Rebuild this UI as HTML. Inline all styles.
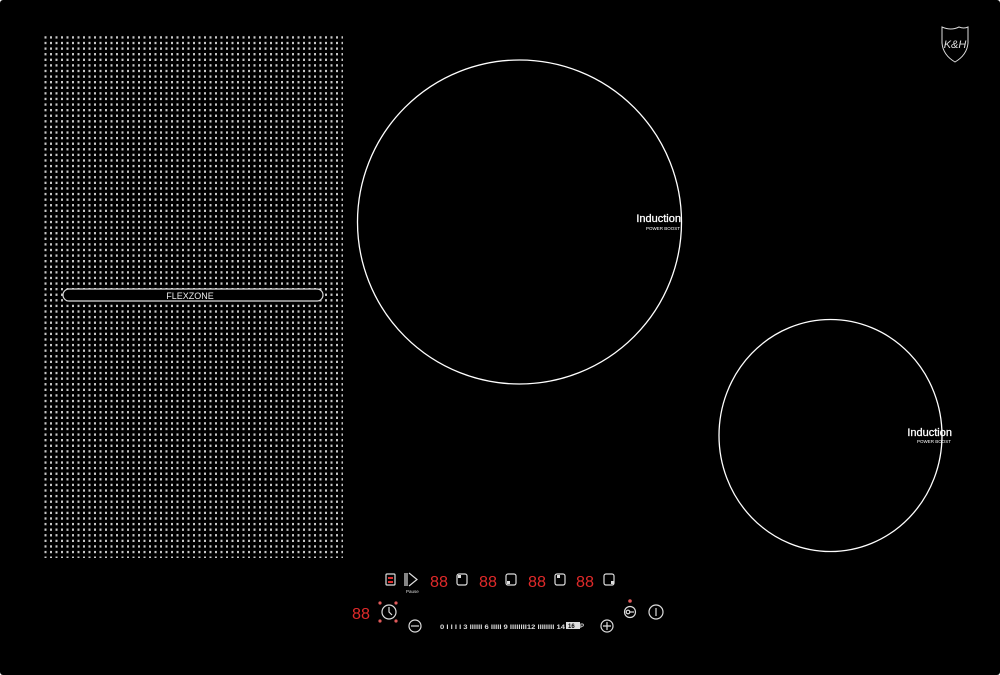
<!DOCTYPE html>
<html><head><meta charset="utf-8"><style>
html,body{margin:0;padding:0;background:#fff;}
#c{position:relative;width:1000px;height:675px;background:#000;overflow:hidden;border-radius:3px;}
#grid{position:absolute;left:44px;top:35px;width:299px;height:523px;
background-image:linear-gradient(90deg,#000 0,#000 3.5px,transparent 3.5px),linear-gradient(#000 0,#000 3.3px,transparent 3.3px);
background-color:#c8c8c8;
background-size:5.5px 5.6px;background-position:-3px -2px;}
svg{position:absolute;left:0;top:0;}
text{font-family:"Liberation Sans",sans-serif;}
</style></head><body><div id="c">
<div id="grid"></div>
<svg width="1000" height="675" viewBox="0 0 1000 675">
<rect x="63" y="289" width="260" height="12" rx="6" fill="#000" stroke="#ddd" stroke-width="1.2"/>
<text x="190" y="299" font-size="9" fill="#eee" text-anchor="middle">FLEXZONE</text>
<circle cx="519.5" cy="222" r="162" fill="none" stroke="#fff" stroke-width="1.3"/>
<text x="681" y="222" font-size="11" fill="#fff" text-anchor="end" stroke="#fff" stroke-width="0.3">Induction</text>
<text x="680" y="230" font-size="4.5" fill="#fff" text-anchor="end">POWER BOOST</text>
<ellipse cx="830.5" cy="435.5" rx="111.5" ry="116" fill="none" stroke="#fff" stroke-width="1.3"/>
<text x="952" y="436" font-size="11" fill="#fff" text-anchor="end" stroke="#fff" stroke-width="0.3">Induction</text>
<text x="951" y="443" font-size="4.5" fill="#fff" text-anchor="end">POWER BOOST</text>
<path d="M942 27 Q951 31 959 27 Q964 29 968 27 L968 43 Q967 55 955 62 Q943 55 942 43 Z" fill="none" stroke="#ddd" stroke-width="1"/>
<text x="955" y="48" font-size="11" font-style="italic" font-family="Liberation Serif" fill="#ddd" text-anchor="middle">K&amp;H</text>
<g font-family="Liberation Mono" fill="#e02a2a">
<text x="430" y="587" font-size="16" textLength="18" lengthAdjust="spacingAndGlyphs">88</text>
<text x="479" y="587" font-size="16" textLength="18" lengthAdjust="spacingAndGlyphs">88</text>
<text x="528" y="587" font-size="16" textLength="18" lengthAdjust="spacingAndGlyphs">88</text>
<text x="576" y="587" font-size="16" textLength="18" lengthAdjust="spacingAndGlyphs">88</text>
<text x="352" y="619" font-size="16" textLength="18" lengthAdjust="spacingAndGlyphs">88</text>
</g>
<g fill="none" stroke="#ddd" stroke-width="1.2">
<rect x="386" y="574" width="9" height="11" rx="1"/>
<path d="M405 573 v13 M407 573 v13 M409 573 l8 6.5 l-8 6.5"/>
<rect x="457" y="574" width="10" height="11" rx="2"/>
<rect x="506" y="574" width="10" height="11" rx="2"/>
<rect x="555" y="574" width="10" height="11" rx="2"/>
<rect x="604" y="574" width="10" height="11" rx="2"/>
<circle cx="389" cy="612" r="7"/>
<path d="M389 607 v5 l3 3"/>
<circle cx="415" cy="626" r="6"/><path d="M411 626 h8"/>
<circle cx="607" cy="626" r="6"/><path d="M603 626 h8 M607 622 v8"/>
<circle cx="630" cy="612" r="5.5"/><circle cx="628" cy="612" r="1.8"/><path d="M630 612 h4"/>
<circle cx="656" cy="612" r="7"/><path d="M656 608 v8"/>
</g>
<g fill="#e03030"><rect x="388" y="577" width="5" height="2"/><rect x="388" y="581" width="5" height="2"/></g>
<g fill="#ddd"><rect x="458" y="575" width="3" height="3"/><rect x="507" y="581" width="3" height="3"/><rect x="557" y="575" width="3" height="3"/><rect x="611" y="581" width="3" height="3"/></g>
<text x="406" y="593" font-size="4.5" fill="#ddd">Pause</text>
<g fill="#e05a5a"><circle cx="380" cy="603" r="1.6"/><circle cx="396" cy="603" r="1.6"/><circle cx="380" cy="621" r="1.6"/><circle cx="396" cy="621" r="1.6"/><circle cx="630" cy="601" r="1.8"/></g>
<text x="440" y="629" font-size="6.5" fill="#ddd" font-weight="bold" textLength="125" lengthAdjust="spacingAndGlyphs">0 I I I I 3 IIIIII 6 IIIII 9 IIIIIIII12 IIIIIIII 14</text>
<rect x="566" y="622" width="14" height="7" fill="#ddd"/>
<text x="568" y="628" font-size="6" fill="#000" font-weight="bold">16</text>
<text x="580" y="628" font-size="6" fill="#ddd" font-weight="bold">P</text>
</svg>
</div></body></html>
